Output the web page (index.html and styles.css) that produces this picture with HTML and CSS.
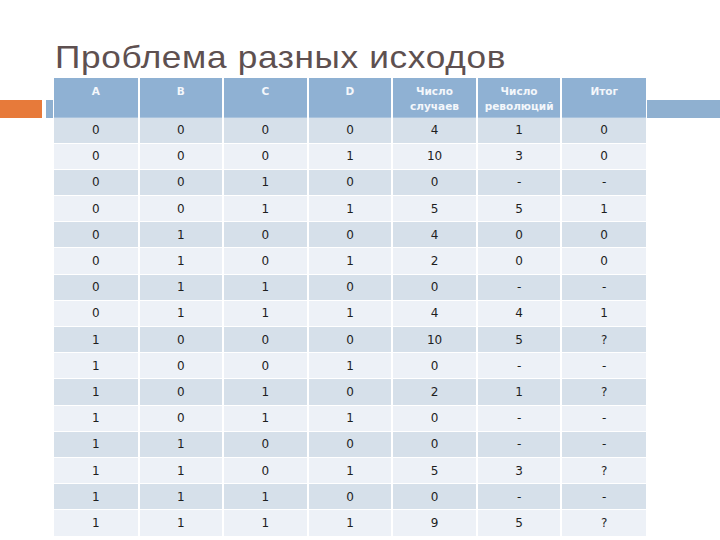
FILE: index.html
```html
<!DOCTYPE html>
<html lang="ru">
<head>
<meta charset="utf-8">
<link rel="stylesheet" href="styles.css">
</head>
<body>
<div class="slide">
  <h1 class="title">Проблема разных исходов</h1>
  <div class="content">
    <div class="decor-left">
      <div class="bar-orange"></div>
      <div class="bar-blue-small"></div>
    </div>
    <table class="grid">
      <thead>
        <tr>
          <th>A</th><th>B</th><th>C</th><th>D</th>
          <th>Число<br>случаев</th><th>Число<br>революций</th><th>Итог</th>
        </tr>
      </thead>
      <tbody>
        <tr><td>0</td><td>0</td><td>0</td><td>0</td><td>4</td><td>1</td><td>0</td></tr>
        <tr><td>0</td><td>0</td><td>0</td><td>1</td><td>10</td><td>3</td><td>0</td></tr>
        <tr><td>0</td><td>0</td><td>1</td><td>0</td><td>0</td><td>-</td><td>-</td></tr>
        <tr><td>0</td><td>0</td><td>1</td><td>1</td><td>5</td><td>5</td><td>1</td></tr>
        <tr><td>0</td><td>1</td><td>0</td><td>0</td><td>4</td><td>0</td><td>0</td></tr>
        <tr><td>0</td><td>1</td><td>0</td><td>1</td><td>2</td><td>0</td><td>0</td></tr>
        <tr><td>0</td><td>1</td><td>1</td><td>0</td><td>0</td><td>-</td><td>-</td></tr>
        <tr><td>0</td><td>1</td><td>1</td><td>1</td><td>4</td><td>4</td><td>1</td></tr>
        <tr><td>1</td><td>0</td><td>0</td><td>0</td><td>10</td><td>5</td><td>?</td></tr>
        <tr><td>1</td><td>0</td><td>0</td><td>1</td><td>0</td><td>-</td><td>-</td></tr>
        <tr><td>1</td><td>0</td><td>1</td><td>0</td><td>2</td><td>1</td><td>?</td></tr>
        <tr><td>1</td><td>0</td><td>1</td><td>1</td><td>0</td><td>-</td><td>-</td></tr>
        <tr><td>1</td><td>1</td><td>0</td><td>0</td><td>0</td><td>-</td><td>-</td></tr>
        <tr><td>1</td><td>1</td><td>0</td><td>1</td><td>5</td><td>3</td><td>?</td></tr>
        <tr><td>1</td><td>1</td><td>1</td><td>0</td><td>0</td><td>-</td><td>-</td></tr>
        <tr><td>1</td><td>1</td><td>1</td><td>1</td><td>9</td><td>5</td><td>?</td></tr>
      </tbody>
    </table>
    <div class="bar-right"></div>
  </div>
</div>
</body>
</html>
```
FILE: styles.css
```css
html, body {
  margin: 0;
  padding: 0;
  background: #ffffff;
}

.slide {
  width: 720px;
  height: 540px;
  overflow: hidden;
  padding-top: 39px;
  box-sizing: border-box;
}

.title {
  margin: 0 0 0 55px;
  height: 39px;
  font-family: "Liberation Sans", Arial, sans-serif;
  font-weight: normal;
  font-size: 32px;
  letter-spacing: 0.6px;
  line-height: 36px;
  color: #5e5050;
  white-space: nowrap;
  transform: scaleX(1.1);
  transform-origin: left top;
}

.content {
  display: flex;
  align-items: flex-start;
}

.decor-left {
  display: flex;
  width: 54px;
  margin-top: 22px;
}

.bar-orange {
  width: 42px;
  height: 18px;
  background: #e77a3a;
}

.bar-blue-small {
  width: 7px;
  height: 18px;
  margin-left: 4px;
  background: #8fb0d0;
}

.bar-right {
  flex: 1;
  height: 18px;
  margin-top: 22px;
  margin-left: 1px;
  background: #8fb0d0;
}

.grid {
  width: 592px;
  table-layout: fixed;
  border-collapse: collapse;
  font-family: "DejaVu Sans", Verdana, sans-serif;
}

.grid th {
  height: 39px;
  box-sizing: border-box;
  padding: 6px 0 0 0;
  vertical-align: top;
  background: #8fb1d3;
  color: #f4f7fb;
  font-size: 10.5px;
  font-weight: bold;
  line-height: 15px;
  border-left: 2px solid #ffffff;
  border-bottom: 1px solid #a9c3dd;
}

.grid td {
  height: 26.2px;
  box-sizing: border-box;
  padding: 0;
  text-align: center;
  vertical-align: middle;
  font-size: 12px;
  color: #1e1e1e;
  border-left: 2px solid #ffffff;
  border-top: 1px solid #ffffff;
}

.grid th:first-child,
.grid td:first-child {
  border-left: none;
}

.grid tbody tr:nth-child(odd) td {
  background: #d6e0ea;
}

.grid tbody tr:nth-child(even) td {
  background: #edf1f7;
}
```
